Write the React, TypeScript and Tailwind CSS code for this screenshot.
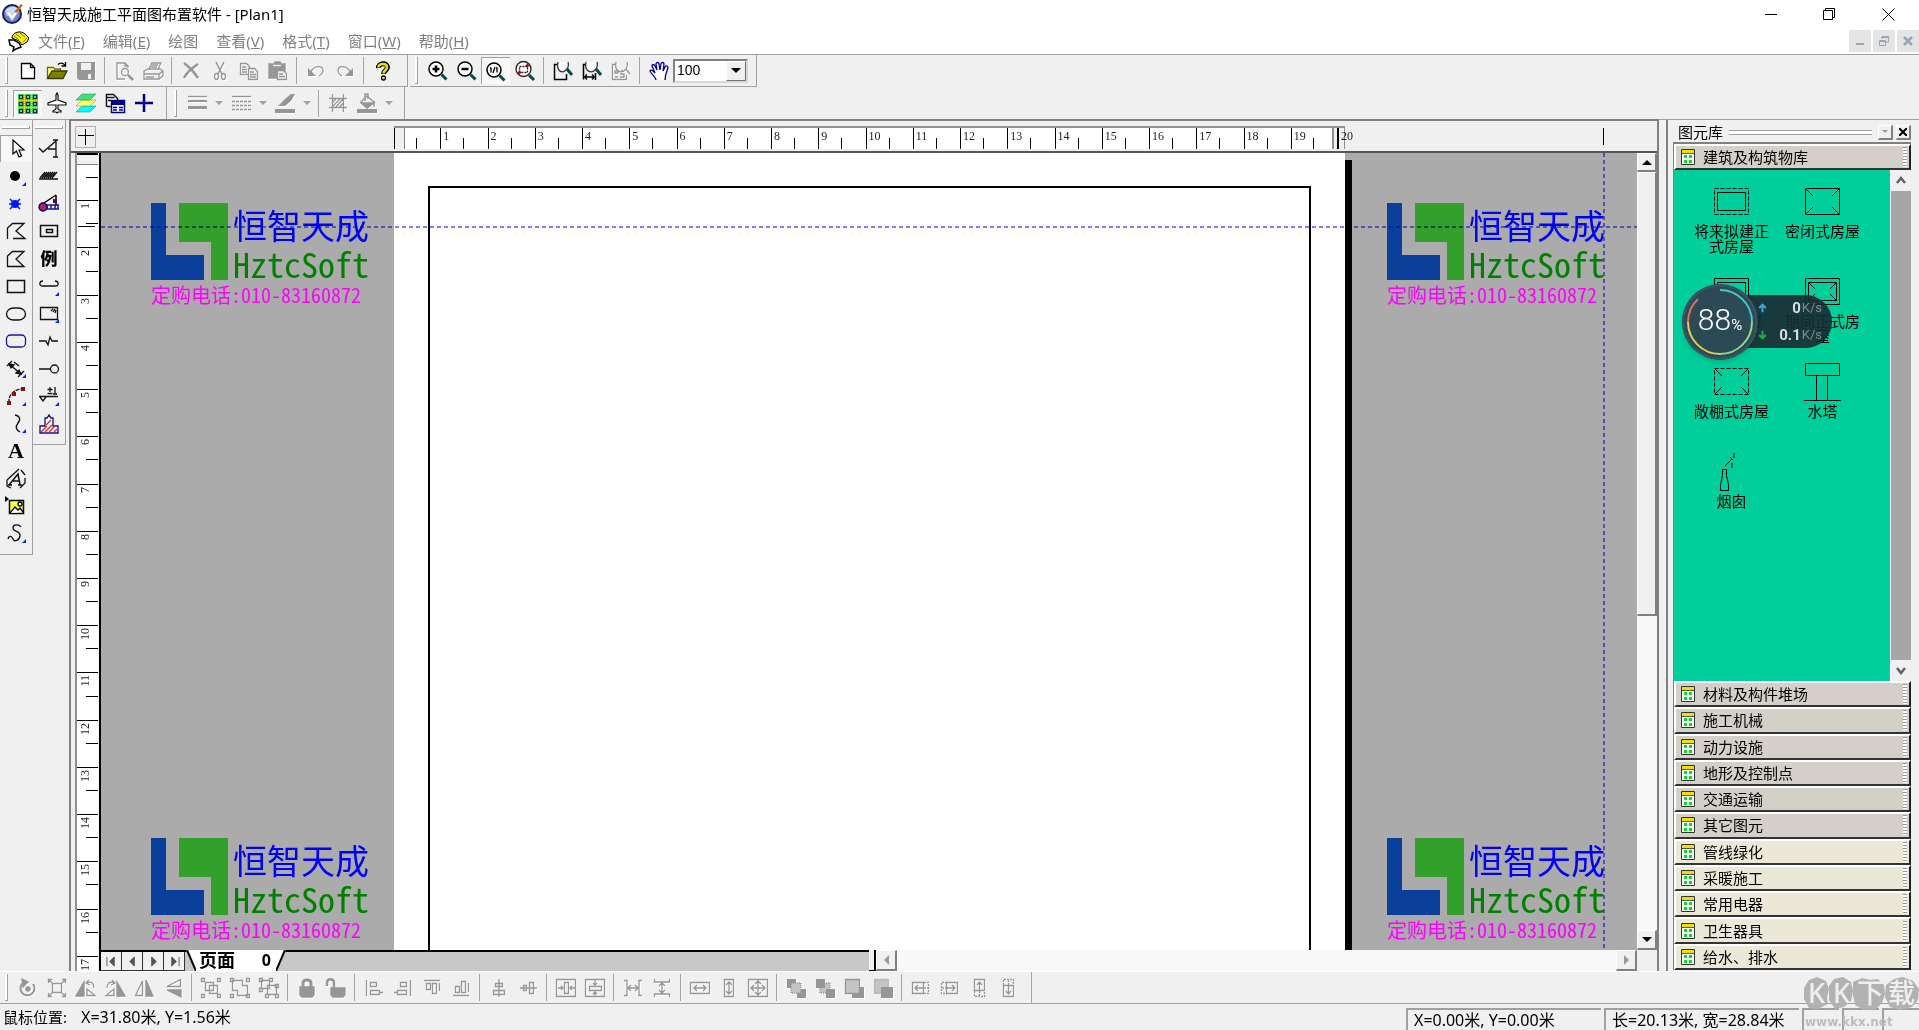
import React from "react";

const K = "#111";

const icons: Record<string, React.ReactNode> = {
  fresh: <path d="M4.5 3.5h9l4 4v11h-13zM13.5 3.5v4h4" stroke="#000" fill="#fff" />,
  open: (
    <>
      <path d="M1.500 18V7.500h6l1 1.500h6V11" fill="#ffff80" stroke="#6b6b00" />
      <path d="M1.500 18.500 6 11h15l-4 7.500z" fill="#808000" stroke="#3a3a00" />
      <path d="M12 4.500c2-2 5-2 7 1M19.500 2v4h-4" stroke="#000" />
    </>
  ),
  save: (
    <>
      <path d="M2 2h18v18H4l-2-2z" fill="currentColor" stroke="none" />
      <path d="M6 3h10v7H6zM13 14h3v5h-3z" fill="#f0f0f0" stroke="none" />
    </>
  ),
  preview: (
    <>
      <path d="M15 8V6l-3-3H4v16h8M12 3v3h3" />
      <circle cx="12" cy="12" r="3.500" />
      <path d="m15 15 5 5" strokeWidth="2.500" />
    </>
  ),
  print: (
    <>
      <path d="m7 9 3-6h9l-3 6M2 11l4-2h12l3 2v5l-4 3H2z" />
      <path d="M2 14h15l4-3M17 14v5M10 5h6M9 7h6M4 17h8" />
    </>
  ),
  cross: <path d="M4 3c4 3 10 9 14 15M18 4C12 8 7 12 4 18" strokeWidth="2.500" />,
  cut: (
    <>
      <path d="m7 2 6 12M15 2 9 14" strokeWidth="1.500" />
      <ellipse cx="7.500" cy="16.500" rx="2" ry="3" />
      <ellipse cx="14.500" cy="16.500" rx="2" ry="3" />
    </>
  ),
  copy: (
    <>
      <path d="M2.500 3.500h6l3 3v8h-9zM4 7h4M4 9.500h5M4 12h5" />
      <path d="M10.500 8.500h6l3 3v8h-9z" fill="#f0f0f0" />
      <path d="M12 12h4M12 14.500h6M12 17h6" />
    </>
  ),
  paste: (
    <>
      <path d="M2 4h5l1-2h5l1 2h4v14H2z" fill="currentColor" />
      <path d="M6 5.500h8" stroke="#f0f0f0" />
      <path d="M10.500 10.500h6l3 3v6h-9z" fill="#f0f0f0" />
      <path d="M12 14h4M12 16.500h6" />
    </>
  ),
  undo: (
    <>
      <path d="M5 13C9 5 17 5 18 10c0 3-2 5-4 6" />
      <path d="M3 8v8h8z" fill="currentColor" stroke="none" />
    </>
  ),
  redo: (
    <>
      <path d="M17 13C13 5 5 5 4 10c0 3 2 5 4 6" />
      <path d="M19 8v8h-8z" fill="currentColor" stroke="none" />
    </>
  ),
  help: (
    <>
      <path d="M6.500 8C6 3 15 2 15.500 7c0 4-4 3-4 7" stroke="#000" strokeWidth="5" />
      <path d="M6.500 7.500C6 3.500 14.500 2.500 15 7c0 4-3.500 3-3.500 6.500" stroke="#e6e600" strokeWidth="2.500" />
      <circle cx="11.500" cy="18" r="2" fill="#e6e600" stroke="#000" />
    </>
  ),
  zin: (
    <>
      <circle cx="9" cy="9" r="7" stroke="#000" fill="#fff" strokeWidth="1.500" />
      <path d="M5.500 9h7M9 5.500v7" stroke="#000" strokeWidth="2.500" />
      <path d="m14.500 14.500 5 5" stroke="#064a4a" strokeWidth="3" />
    </>
  ),
  zout: (
    <>
      <circle cx="9" cy="9" r="7" stroke="#000" fill="#fff" strokeWidth="1.500" />
      <path d="M5.500 9h7" stroke="#000" strokeWidth="2.500" />
      <path d="m14.500 14.500 5 5" stroke="#064a4a" strokeWidth="3" />
    </>
  ),
  zone: (
    <>
      <circle cx="9" cy="10" r="7" stroke="#000" fill="#fff" strokeWidth="1.500" />
      <path d="M6 7.500v5M12 7.500v5M10 7l-2 6M5 8h1M11 8h1" stroke="#000" />
      <path d="m14.500 15.500 5 5" stroke="#064a4a" strokeWidth="3" />
    </>
  ),
  zarea: (
    <>
      <circle cx="9.500" cy="9" r="7.500" stroke="#222" fill="#fff" />
      <path d="M5.500 12.500v-6h8v6z" stroke="#222" strokeDasharray="2 1" />
      <path d="M3.500 12.500h4M5.500 10.500v4M11.500 5.500h4M13.500 3.500v4" stroke="#b00000" strokeWidth="1.500" />
      <path d="m15 15 5 5" stroke="#064a4a" strokeWidth="3" />
    </>
  ),
  zpage: (
    <>
      <path d="M6 4.500H2.500v15h12V14" stroke="#000" strokeWidth="1.500" />
      <path d="M6 2c-2 9 4 12 8 8 2-2 3-5 2-8" stroke="#333" fill="#fff" />
      <path d="m15 9 5 6" stroke="#064a4a" strokeWidth="3" />
    </>
  ),
  zwidth: (
    <>
      <path d="M5 4.500H2.500v15M14.500 13v7" stroke="#000" strokeWidth="1.500" />
      <path d="M5 2c-2 9 5 12 9 8 2-2 3-5 2-8" stroke="#333" fill="#fff" />
      <path d="m15 9 5 6" stroke="#064a4a" strokeWidth="3" />
      <path d="M4 17h9M6 14.500 3.500 17 6 19.500M11 14.500l2.500 2.500-2.500 2.500" stroke="#000" />
    </>
  ),
  zobj: (
    <>
      <path d="M5 4.500H2.500v15h14V15" />
      <path d="M6 2c-2 9 5 12 9 8 2-2 3-5 2-8M16 9l4 5" />
      <path d="M5 11h3v2H5zM5 17h3M10 14h4v3h-4M11 11h2" />
    </>
  ),
  hand: (
    <path
      d="M8 20c0-3-4-5-6-9 1-2 3 0 5 2L4 6c0-2 2-2 3 0l2 4-1-6c0-2 3-2 3 0l1 6 1-6c0-2 3-2 3 0l-1 7 2-4c1-2 3-1 3 1-2 5-3 7-3 12"
      stroke="#000099"
      fill="#fff"
      strokeWidth="1.300"
    />
  ),
  dots: (
    <>
      <path d="M1 1h20v20H1z" fill="#2fe36b" stroke="none" />
      <path d="M1 7.500h20M1 14.500h20M7.500 1v20M14.500 1v20" stroke="#ffee20" strokeDasharray="1 1" />
      {[2.500, 9.500, 16.500].map((y) =>
        [2.500, 9.500, 16.500].map((x) => <rect key={`${x}-${y}`} x={x} y={y} width="3" height="3" fill="#aef" stroke="#033" />)
      )}
    </>
  ),
  plane: (
    <path d="M10 8V3l1-2 1 2v5l8 3v2h-8v4l3 2v1h-3l-1 1-1-1H7v-1l3-2v-4H2v-2z" stroke="#111" fill="#fff" strokeWidth="1.200" />
  ),
  layers: (
    <>
      <path d="M7 14h14l-6 6H1z" fill="#00ffff" stroke="#008888" strokeWidth=".5" />
      <path d="M7 8h14l-6 6H1z" fill="#ffff66" stroke="#888800" strokeWidth=".5" />
      <path d="M7 2h14l-6 6H1z" fill="#40e080" stroke="#118844" strokeWidth=".5" />
    </>
  ),
  docs: (
    <>
      <path d="M2.500 14.500v-12h7l4 4v2M2.500 5.500h8M2.500 14.500h4M4 8.500h3" stroke="#111" strokeWidth="1.500" fill="#fff" />
      <path d="M7.500 8.500h13v12h-13z" stroke="#000070" fill="#fff" strokeWidth="1.500" />
      <path d="M7 8h14v5H7z" fill="#000090" stroke="none" />
      <path d="M9 15.500h4M15 15.500h4M9 18h4M15 18h4" stroke="#000070" />
    </>
  ),
  plus: <path d="M11 2v18M2 11h18" stroke="#000090" strokeWidth="2.500" />,
  lines: (
    <>
      <path d="M2 4.500h19" />
      <path d="M2 9h19" strokeWidth="2" />
      <path d="M2 15.500h19" strokeWidth="3" />
    </>
  ),
  dashes: (
    <>
      <path d="M2 4.500h19" />
      <path d="M2 9.500h19M2 13.500h19M2 17.500h19" strokeDasharray="3 1" />
    </>
  ),
  pen: <path d="M1 17h20v4H1zM5 13l7-7 5-4h4l-4 7-6 5H4z" fill="currentColor" stroke="none" />,
  hatch: <path d="M5.500 2v18M16.500 2v18M2 6.500h18M2 15.500h18M6 14l7-7M8 16l8-9M12 16l4-5M6 10l3-3" />,
  bucket: (
    <>
      <path d="M1 17h20v4H1z" fill="currentColor" stroke="none" />
      <path d="m5 10 6-6 7 6-7 6z" />
      <path d="M5 11h13l-7 5z" fill="currentColor" />
      <path d="M9 9V2h3v5M18 9v6" strokeWidth="1.500" />
    </>
  ),
  pointer: <path d="M7 2v14l3.500-3 2.500 6 2.500-1-2.500-6h5z" fill="#fff" stroke="#000" strokeWidth="1.200" />,
  dot: <circle cx="10" cy="11" r="5" fill="#000" stroke="none" />,
  node: (
    <>
      <circle cx="10" cy="11" r="4" fill="#0018ff" stroke="none" />
      <path d="m5 6 10 10M15 6 5 16M4 11h12" stroke="#0018ff" strokeWidth="1.500" />
    </>
  ),
  polyopen: <path d="M2.500 19V8l5-4.500H19L11 11l9 7.500H8" stroke={K} strokeWidth="1.300" />,
  poly: <path d="M2.500 18.500V8l5-4.500H19L11 11l8 7.500z" stroke={K} strokeWidth="1.300" />,
  rect: <path d="M2.500 5.500h17v12h-17z" stroke={K} strokeWidth="1.500" />,
  oval: <rect x="1.500" y="5" width="19" height="12" rx="7" stroke={K} strokeWidth="1.300" />,
  round: <rect x="1.500" y="5" width="19" height="12" rx="4" stroke="#1414a0" strokeWidth="1.300" />,
  dim: (
    <>
      <path d="m4 6 12 10M2 8l5-5M13 19l6-6M9 4l5 4" stroke={K} />
      <path d="m4 6 5 1-3 3zM16 16l-5-1 3-3z" fill={K} stroke={K} />
    </>
  ),
  arc: (
    <>
      <path d="M4 18C3 10 9 4 18 4" stroke={K} strokeDasharray="4 1" />
      <path d="M2 16h4v4H2zM7 7h4v4H7zM16 2h4v4h-4z" fill="#901010" stroke="none" />
    </>
  ),
  curve: <path d="M10 2c5 1 6 4 3 8s-2 7 2 9" stroke={K} strokeWidth="1.300" />,
  curvetext: (
    <>
      <path d="M2 12 14 1M15 20l5-5v-5M2 12v6l4 2M16 2l4 5" stroke={K} />
      <path d="M4 17 13 6l2 11M8 13h6M3 17h4M13 17h4" stroke={K} strokeWidth="1.500" />
    </>
  ),
  picture: (
    <>
      <path d="M0 1v6l4-3z" fill="#000" stroke="none" />
      <path d="M4.500 5.500h14v13h-14z" fill="#ffff40" stroke="#000" strokeWidth="1.500" />
      <path d="m5 18 5-6 3 3 2-2 3 4" fill="#fff" stroke="#000" />
      <circle cx="15" cy="9" r="2" fill="#fff" stroke="#000" />
    </>
  ),
  scurve: <path d="M16 4c-2-3-8-3-8 1s8 3 7 8-6 6-7 3-4-4-5 0" stroke={K} strokeWidth="1.300" />,
  check: <path d="m1 10 4 4L18 3M18 2v17M10 11h8M15 2h5M15 19h5" stroke={K} strokeWidth="1.300" />,
  ground: <path d="M1 14h19M2 13l5-6M6 13l5-6M10 13l5-6M14 13l5-6M4 13l5-6M8 13l5-6M12 13l5-6" stroke={K} />,
  crane: (
    <>
      <path d="M1 12h20M1 16h20M9 12v4M13 12v4M17 12v4M20 12v4" stroke="#1414a0" strokeWidth="1.500" />
      <path d="M3 12 18 2M18 2v10" stroke="#000" strokeWidth="1.500" />
      <circle cx="5" cy="14" r="4" fill="#b0206a" stroke="#000060" />
      <path d="M15 6h4v4h-4z" fill="#501030" stroke="none" />
    </>
  ),
  nested: <path d="M2.500 5.500h17v11h-17zM8.500 9.500h6v3h-6z" stroke={K} strokeWidth="1.500" />,
  bracket: <path d="M5 6C1 6 1 11 4 11h14c3 0 3-5-1-5" stroke={K} strokeWidth="1.300" />,
  sheet: <path d="M2.500 4.500h17v12h-17zM13 8l2-2M15 9l2-3M17 10l1-3" stroke={K} strokeWidth="1.300" />,
  brk: <path d="M1 11h7l2 4 2-8 2 4h6" stroke={K} strokeWidth="1.300" />,
  pin: (
    <>
      <path d="M1 11h12" stroke={K} strokeWidth="1.500" />
      <circle cx="16.500" cy="11" r="4" stroke={K} />
    </>
  ),
  level: <path d="M1 11.500h19M2 12l3 4 3-4M12 2v5M9.500 4.500h5M9.500 8.500h5M17 2v7M15 9h4" stroke={K} strokeWidth="1.300" />,
  base: (
    <>
      <path d="M2 20v-7h5V5h2l2-3 2 3h2v8h5v7z" fill="#fff" stroke="#101080" strokeWidth="1.300" />
      <path d="m3 19 6-6M7 19l7-7M11 19l6-6M16 19l3-3M8 12l5-5" stroke="#e03030" strokeWidth="1.500" />
    </>
  ),
  rotate: (
    <>
      <path d="M6 6a7 7 0 1 0 10 1" strokeWidth="2" />
      <path d="m5 2 6 3-5 5z" fill="currentColor" />
      <circle cx="11" cy="12" r="2" fill="currentColor" />
    </>
  ),
  resize: <path d="M6.500 6.500h9v9h-9zM6 6 2 2M16 6l4-4M6 16l-4 4M16 16l4 4M2.500 6V2.500H6M16 2.500h3.500V6M2.500 16v3.500H6M19.500 16v3.500H16" />,
  rotl: (
    <>
      <path d="m1 19 8-14v14z" fill="currentColor" />
      <path d="M12 18.500h8L12 12zM12 6c4-2 7 0 7 5M14 3l-3 3 4 2" />
    </>
  ),
  rotr: (
    <>
      <path d="m21 19-8-14v14z" fill="currentColor" />
      <path d="M10 18.500H2L10 12zM10 6c-4-2-7 0-7 5M8 3l3 3-4 2" />
    </>
  ),
  fliph: (
    <>
      <path d="M9.500 4v14.500h-7z" />
      <path d="M13 3v16h7z" fill="currentColor" />
    </>
  ),
  flipv: (
    <>
      <path d="M18.500 2.500v7H5z" />
      <path d="M19 20v-7H5z" fill="currentColor" />
    </>
  ),
  group: (
    <path d="M5.500 5.500h8v8h-8zM9.500 8.500h8v8h-8zM1.500 1.500h3v3h-3zM17.500 1.500h3v3h-3zM1.500 17.500h3v3h-3zM17.500 17.500h3v3h-3z" />
  ),
  ungroup: <path d="M3.500 3.500h10v5h5v10h-10v-5h-5zM1.500 1.500h3v3h-3zM17.500 1.500h3v3h-3zM1.500 17.500h3v3h-3zM17.500 17.500h3v3h-3z" />,
  regroup: (
    <path d="M3.500 3.500h8v8h-8zM9.500 8.500h9v9h-9zM1.500 1.500h3v3h-3zM11.500 1.500h3v3h-3zM1.500 11.500h3v3h-3zM17.500 7.500h3v3h-3zM7.500 17.500h3v3h-3zM17.500 17.500h3v3h-3z" />
  ),
  lock: (
    <>
      <path d="M4 10h14v8l-2 2H6l-2-2z" fill="currentColor" />
      <path d="M7 10V6c0-4 8-4 8 0v4" strokeWidth="3" />
    </>
  ),
  unlock: (
    <>
      <path d="M6 11h14v7l-2 2H8l-2-2z" fill="currentColor" />
      <path d="M9 11V6c0-5-7-5-7 0v3" strokeWidth="2.500" />
    </>
  ),
  al: <path d="M3.500 3v16M7.500 5.500h6v4h-6zM7.500 13.500h9v4h-9zM17 15.500h3" />,
  ar: <path d="M18.500 3v16M8.500 5.500h6v4h-6zM5.500 13.500h9v4h-9zM2 15.500h3" />,
  at: <path d="M3 3.500h16M5.500 6.500h4v6h-4zM11.500 6.500h4v10h-4zM18.500 6v8" />,
  ab: <path d="M3 18.500h16M5.500 9.500h4v6h-4zM11.500 4.500h4v11h-4zM18.500 6v9" />,
  cv: <path d="M11 2v18M7.500 6.500h7v3h-7zM5.500 13.500h11v4h-11z" fill="#f0f0f0" />,
  ch: <path d="M3 11h17M6.500 8.500h3v5h-3zM12.500 5.500h4v11h-4z" fill="#f0f0f0" />,
  pch: <path d="M1.500 2.500h19v17h-19zM9.500 5.500h4v11h-4zM3 11h5M15 11h5M6 9l2 2-2 2M17 9l-2 2 2 2" />,
  pcv: <path d="M1.500 2.500h19v17h-19zM5.500 9.500h12v4h-12zM11 3v5M11 15v4M9 6l2 2 2-2M9 17l2-2 2 2" />,
  sh: <path d="M2 3.500h3v15H2M20 3.500h-3v15h3M6 11h10M9 8l-3 3 3 3M13 8l3 3-3 3" />,
  sv: <path d="M3.500 2v3h15V2M3.500 20v-3h15v3M11 6v10M8 9l3-3 3 3M8 13l3 3 3-3" />,
  ww: <path d="M1.500 5.500h19v11h-19zM5 11h12M8 8l-3 3 3 3M14 8l3 3-3 3" />,
  hh: <path d="M6.500 2.500h9v17h-9zM11 5v12M8 8l3-3 3 3M8 14l3 3 3-3" />,
  wh: <path d="M1.500 2.500h19v17h-19zM4 11h14M11 4v14M7 8l-3 3 3 3M15 8l3 3-3 3M8 7l3-3 3 3M8 15l3 3 3-3" />,
  z1: (
    <>
      <path d="M2 2h9v9H2zM12 12h9v9h-9z" fill="currentColor" stroke="none" />
      <path d="M6 6h10v10H6z" fill="#c4c4c4" strokeDasharray="1 1" />
    </>
  ),
  z2: (
    <>
      <path d="M6 6h10v10H6z" fill="#c4c4c4" strokeDasharray="1 1" />
      <path d="M2 2h9v9H2zM12 12h9v9h-9z" fill="currentColor" stroke="none" />
    </>
  ),
  z3: (
    <>
      <path d="M9 10h12v11H9z" fill="currentColor" stroke="none" />
      <path d="M2.500 2.500h14v14h-14z" fill="#c4c4c4" />
    </>
  ),
  z4: (
    <>
      <path d="M2.500 2.500h14v14h-14z" fill="#c4c4c4" strokeDasharray="1 1" />
      <path d="M9 10h12v11H9z" fill="currentColor" stroke="none" />
    </>
  ),
  n1: (
    <>
      <path d="M2.500 5.500h11v11h-11zM5 11h8M8 8l-3 3 3 3" />
      <path d="M14 5.500h4.500v11H14M14 11h4" strokeDasharray="2 1" />
    </>
  ),
  n2: (
    <>
      <path d="M7.500 5.500h11v11h-11zM8 11h8M13 8l3 3-3 3" />
      <path d="M8 5.500H2.500v11H8M3 11h5" strokeDasharray="2 1" />
    </>
  ),
  n3: (
    <>
      <path d="M6.500 2.500h10v11h-10zM11.500 5v8M9 8l2.500-3L14 8" />
      <path d="M6.500 14v5.500h10V14M11.500 14v5" strokeDasharray="2 1" />
    </>
  ),
  n4: (
    <>
      <path d="M6.500 8.500h10v11h-10zM11.500 9v8M9 14l2.500 3 2.500-3" />
      <path d="M6.500 8V2.500h10V8M11.500 3v5" strokeDasharray="2 1" />
    </>
  ),
};

function Icon({ name }: { name: string }) {
  return (
    <svg viewBox="0 0 22 22" className="h-[22px] w-[22px] shrink-0" fill="none" stroke="currentColor" strokeWidth="1.300">
      {icons[name]}
    </svg>
  );
}

function Tool({ name, label, off, pressed }: { name: string; label: string; off?: boolean; pressed?: boolean }) {
  return (
    <button
      aria-label={label}
      disabled={off}
      className={`flex h-[27px] w-[29px] shrink-0 items-center justify-center text-[#969696] ${off ? "drop-shadow-[1px_1px_0_#fff]" : ""} ${
        pressed ? "border-t border-l border-[#a0a0a0] bg-[#f8f8f8]" : ""
      }`}
    >
      <Icon name={name} />
    </button>
  );
}

const Sep = () => <span className="mx-1 h-[27px] w-px shrink-0 bg-[#a6a6a6]" />;
const Grip = () => <span className="mr-[5px] ml-[5px] h-[27px] w-[3px] shrink-0 border-r border-b border-[#a0a0a0] bg-white" />;

function Strip({ items, off }: { items: string[]; off?: boolean }) {
  return (
    <>
      {items.map((n, i) => (n === "|" ? <Sep key={i} /> : <Tool key={i} name={n} label={n} off={off} pressed={n === "zone" || n === "dots"} />))}
    </>
  );
}

function DropArrow({ label }: { label: string }) {
  return (
    <button aria-label={label} disabled className="flex h-[27px] w-[15px] shrink-0 items-center justify-center">
      <span className="border-x-[4px] border-t-[4px] border-x-transparent border-t-[#9f9f9f]" />
    </button>
  );
}

const menus: [string, string][] = [
  ["文件", "F"],
  ["编辑", "E"],
  ["绘图", ""],
  ["查看", "V"],
  ["格式", "T"],
  ["窗口", "W"],
  ["帮助", "H"],
];

function Header() {
  return (
    <header className="shrink-0 border-b border-[#a0a0a0] bg-white">
      <div className="flex h-[30px] items-center pb-[2px] pl-[1px]">
        <svg viewBox="0 0 22 22" className="h-[22px] w-[22px]">
          <circle cx="11" cy="11" r="10" fill="#17205e" />
          <circle cx="11" cy="11" r="8" fill="#6d86c8" />
          <path d="M4 8c3-5 10-6 13-2l-3 5-8 2z" fill="#cfdcf6" />
          <path d="m5 9 6 9 7-10-2-2-5 6-3-4z" fill="#fff" stroke="#8a9ad0" strokeWidth=".5" />
          <path d="m13 9 7-8 2 1-6 8z" fill="#c96b1c" />
        </svg>
        <h1 className="ml-[4px] grow text-[15px] text-black">恒智天成施工平面图布置软件 - [Plan1]</h1>
        <button aria-label="最小化" className="flex h-[28px] w-[59px] items-center justify-center">
          <span className="h-px w-[12px] bg-black" />
        </button>
        <button aria-label="还原" className="flex h-[28px] w-[58px] items-center justify-center">
          <svg viewBox="0 0 13 13" className="h-[13px] w-[13px]" fill="none" stroke="#000">
            <path d="M.5 2.500h9v9h-9zM2.500 2.500v-2h9v9h-2" />
          </svg>
        </button>
        <button aria-label="关闭" className="flex h-[28px] w-[61px] items-center justify-center">
          <svg viewBox="0 0 13 13" className="h-[13px] w-[13px]" stroke="#000">
            <path d="m.5.5 12 12M12.500.5l-12 12" />
          </svg>
        </button>
      </div>
      <nav className="flex h-[24px] items-center pb-[2px]">
        <svg viewBox="0 0 22 22" className="ml-[7px] h-[22px] w-[22px]">
          <path d="M5 8c0-6 9-8 13-4l4 4-2 4-5 3-3-4z" fill="#ffee00" stroke="#000" />
          <path d="M2 10h5l5 3 2 4-5 2-3 2 1-4-4-2z" fill="#fff" stroke="#000" strokeWidth="1.500" />
          <path d="m9 4 5 4M7 6l5 4M13 3l5 4M16 12l4-4" stroke="#807700" />
        </svg>
        <div className="flex grow">
          {menus.map(([t, k]) => (
            <button key={t} className="mx-[1px] px-[8px] text-[15px] leading-[22px] text-[#808080]">
              {t}
              {k && (
                <>
                  (<span className="underline">{k}</span>)
                </>
              )}
            </button>
          ))}
        </div>
        <div className="flex gap-[2px]">
          <button aria-label="最小化文档" className="flex h-[22px] w-[22px] items-center justify-center bg-[#e4e4e4]">
            <span className="mt-[6px] h-[2px] w-[8px] bg-[#98a5b3]" />
          </button>
          <button aria-label="还原文档" className="flex h-[22px] w-[22px] items-center justify-center bg-[#e4e4e4]">
            <svg viewBox="0 0 12 12" className="h-[12px] w-[12px]" fill="none" stroke="#98a5b3">
              <path d="M1.500 5.500h6v5h-6zM1.500 6.500h6M4 4V1.500h6.500V7H8M4 2.500h6" />
            </svg>
          </button>
          <button aria-label="关闭文档" className="flex h-[22px] w-[22px] items-center justify-center bg-[#e4e4e4]">
            <svg viewBox="0 0 12 12" className="h-[12px] w-[12px]" stroke="#98a5b3" strokeWidth="2.500">
              <path d="m2 2 8 8M10 2l-8 8" />
            </svg>
          </button>
        </div>
      </nav>
    </header>
  );
}

const bar = "flex items-center border-r border-b border-[#a0a0a0]";

function Toolbars() {
  return (
    <div className="shrink-0">
      <div className="flex h-[32px]">
        <div className={`${bar} w-[408px]`}>
          <Grip />
          <Tool name="fresh" label="新建" />
          <Tool name="open" label="打开" />
          <Strip off items={["save", "|", "preview", "print", "|", "cross", "cut", "copy", "paste", "|", "undo", "redo", "|"]} />
          <Tool name="help" label="帮助" />
        </div>
        <div className={`${bar} ml-[2px] w-[347px]`}>
          <Grip />
          <Strip items={["zin", "zout", "zone", "zarea", "|", "zpage", "zwidth"]} />
          <Tool name="zobj" label="缩放对象" off />
          <Sep />
          <Tool name="hand" label="平移" />
          <div className="relative h-[24px] w-[75px] border-2 border-[#d8d8d8] border-t-[#808080] border-l-[#808080] bg-white">
            <select
              aria-label="缩放比例"
              defaultValue="100"
              className="block h-[18px] w-full appearance-none pl-[2px] font-['Liberation_Sans',sans-serif] text-[14px] leading-[18px] text-black outline-none"
            >
              <option>100</option>
              <option>200</option>
            </select>
            <span className="pointer-events-none absolute top-0 right-0 flex h-[20px] w-[20px] items-center justify-center border border-t-white border-l-white border-r-[#707070] border-b-[#707070] bg-[#f0f0f0]">
              <span className="border-x-[5px] border-t-[5px] border-x-transparent border-t-black" />
            </span>
          </div>
        </div>
      </div>
      <div className="flex h-[32px]">
        <div className={`${bar} w-[167px] border-b-0`}>
          <Grip />
          <Strip items={["dots", "plane", "layers", "docs", "plus"]} />
        </div>
        <div className={`${bar} ml-[2px] w-[236px] border-b-0`}>
          <Grip />
          <Tool name="lines" label="线宽" off />
          <DropArrow label="线宽选项" />
          <Tool name="dashes" label="线型" off />
          <DropArrow label="线型选项" />
          <Tool name="pen" label="线色" off />
          <DropArrow label="线色选项" />
          <Sep />
          <Tool name="hatch" label="图案" off />
          <Tool name="bucket" label="填充" off />
          <DropArrow label="填充选项" />
        </div>
      </div>
    </div>
  );
}

const palette1 = ["pointer", "dot*", "node", "polyopen", "poly", "rect", "oval", "round", "dim*", "arc*", "curve*", "A", "curvetext", "picture", "scurve*"];
const palette2 = ["check", "ground", "crane", "nested", "例", "bracket*", "sheet*", "brk", "pin", "level*", "base"];

function Palette({ items }: { items: string[] }) {
  return (
    <div className="border-r border-b border-[#a0a0a0] pb-[7px]">
      <div className="mx-[2px] mt-[6px] mb-[6px] h-[3px] border-r border-b border-[#a0a0a0] bg-white" />
      <div className="grid">
        {items.map((it, i) => {
          const n = it.replace("*", "");
          return (
            <button
              key={it}
              aria-label={n}
              className={`relative flex w-[32px] items-center justify-center text-black ${i % 2 ? "h-[28px]" : "h-[27px]"} ${
                n === "pointer" ? "border-t border-l border-[#a0a0a0] bg-[#f8f8f8]" : ""
              }`}
            >
              {n === "A" ? (
                <span className="font-['Liberation_Serif',serif] text-[22px] leading-[22px] font-bold">A</span>
              ) : n === "例" ? (
                <span className="text-[17px] leading-[22px] font-black">例</span>
              ) : (
                <Icon name={n} />
              )}
              {it !== n && <span className="absolute right-[6px] bottom-[4px] border-b-[4px] border-l-[4px] border-b-[#0020ff] border-l-transparent" />}
            </button>
          );
        })}
      </div>
    </div>
  );
}

const rulerText = "font-['Liberation_Serif',serif] text-[12px] leading-[13px] text-[#222]";

function HRuler() {
  return (
    <div className="flex h-[32px] shrink-0 items-start border-b-2 border-[#555] pt-[5px]">
      <button aria-label="原点" className="ml-[4px] flex h-[22px] w-[21px] items-center justify-center border border-[#b0b0b0]">
        <svg viewBox="0 0 16 16" className="h-[16px] w-[16px]" stroke="#000">
          <path d="M7.500 0v16M0 6.500h16" />
        </svg>
      </button>
      <div className="ml-[298px] grid h-[23px] w-[951px] grid-cols-[945px_6px] border-t-2 border-[#909090]">
        <div className="grid grid-cols-20 bg-white">
          {Array.from({ length: 20 }, (_, i) => (
            <div key={i} className={`flex h-[21px] ${i === 19 ? "border-r-2 border-black" : "border-r border-black"}`}>
              <div className={`flex w-1/2 items-end border-black ${i === 0 ? "border-l" : ""}`}>
                {i === 0 && <span className="h-[21px] w-[10px] border-r border-[#808080] bg-[#f0f0f0]" />}
                <span className={`grow self-start pt-[2px] pl-[2px] ${rulerText}`}>{i || ""}</span>
                <span className="h-[11px] w-px bg-black" />
              </div>
              {i === 19 && <span className="ml-auto h-[21px] w-[5px] border-l-2 border-[#909090] bg-[#f0f0f0]" />}
            </div>
          ))}
        </div>
        <div className={`border-r border-[#909090] pt-[2px] pl-[2px] ${rulerText}`}>20</div>
      </div>
      <span className="mt-[2px] ml-[258px] h-[17px] w-px bg-black" />
    </div>
  );
}

function VRuler() {
  return (
    <div className="relative h-full w-[30px] shrink-0 overflow-hidden border-r-2 border-black pl-[4px]">
      <div className="grid h-[850px] w-[23px] auto-rows-fr border-l-2 border-[#909090] bg-white">
        {Array.from({ length: 18 }, (_, i) => (
          <div key={i} className={`flex flex-col border-black ${i === 0 ? "border-t-2" : "border-t"}`}>
            <div className="flex h-1/2 flex-col justify-between">
              {i === 0 ? (
                <span className="h-[10px] w-full border-b border-[#808080] bg-[#f0f0f0]" />
              ) : (
                <span className={`rotate-180 self-start pr-[2px] pb-[2px] [writing-mode:vertical-rl] ${rulerText}`}>{i}</span>
              )}
              <span className="h-px w-[12px] self-end bg-black" />
            </div>
          </div>
        ))}
      </div>
      <span className="absolute top-[73px] left-[7px] h-px w-[17px] bg-black" />
    </div>
  );
}

function Brand({ className }: { className: string }) {
  return (
    <div className={`absolute w-[224px] ${className}`}>
      <div className="flex h-[77px] gap-[5px]">
        <svg viewBox="0 0 77 77" className="h-[77px] w-[77px] shrink-0">
          <path d="M0 0h15v52h38v25H0z" fill="#0a3f9c" />
          <path d="M28 0h49v77H60V39H28z" fill="#33a02c" />
        </svg>
        <div className="pt-[6px] whitespace-nowrap">
          <div className="text-[34px] leading-[35px] text-[#0000ff]">恒智天成</div>
          <div className="font-['Noto_Sans_Mono_CJK_SC','Noto_Sans_Mono','Liberation_Mono',monospace] text-[34px] leading-[39px] text-[#008000]">HztcSoft</div>
        </div>
      </div>
      <div className="font-['Noto_Sans_Mono_CJK_SC','Noto_Sans_CJK_SC',monospace] text-[20px] leading-[29px] whitespace-nowrap text-[#ff00ff]">
        定购电话:010-83160872
      </div>
    </div>
  );
}

function Canvas() {
  return (
    <div className="relative min-w-0 grow overflow-hidden bg-[#ababab]">
      <div className="absolute top-[7px] bottom-0 left-[300px] w-[951px] bg-black" />
      <div className="absolute top-0 bottom-0 left-[293px] w-[951px] bg-white" />
      <div className="absolute top-[33px] bottom-0 left-[327px] w-[883px] border-[2px] border-b-0 border-black" />
      <Brand className="top-[50px] left-[50px]" />
      <Brand className="top-[50px] left-[1286px]" />
      <Brand className="top-[685px] left-[50px]" />
      <Brand className="top-[685px] left-[1286px]" />
      <div className="absolute top-[73px] right-0 left-0 h-[2px] bg-[repeating-linear-gradient(90deg,#7c7cff_0_4px,transparent_4px_7px)] mix-blend-multiply" />
      <div className="absolute top-0 bottom-0 left-[1502px] w-[2px] bg-[repeating-linear-gradient(180deg,#7c7cff_0_4px,transparent_4px_7px)] mix-blend-multiply" />
    </div>
  );
}

const btn = "flex shrink-0 items-center justify-center border-t border-l border-r-2 border-b-2 border-t-white border-l-white border-r-[#808080] border-b-[#808080] bg-[#f0f0f0]";

function Pane() {
  const nav = ["M1 1v10M9 1v10L4 6z", "M8 1v10L3 6z", "M4 1v10l5-5z", "M3 1v10l5-5zM11 1v10"];
  return (
    <section className="flex min-w-0 grow flex-col border-t-2 border-r-2 border-l-2 border-[#808080]">
      <HRuler />
      <div className="flex min-h-0 grow">
        <VRuler />
        <div className="flex min-w-0 grow flex-col">
          <div className="flex min-h-0 grow">
            <Canvas />
            <div className="flex w-[20px] shrink-0 flex-col bg-[#f8f8f8]">
              <button aria-label="向上滚动" className={`${btn} h-[19px]`}>
                <span className="border-x-[5px] border-b-[5px] border-x-transparent border-b-black" />
              </button>
              <div className={`${btn} h-[444px]`} />
              <button aria-label="向下滚动" className={`${btn} mt-auto h-[20px]`}>
                <span className="border-x-[5px] border-t-[5px] border-x-transparent border-t-black" />
              </button>
            </div>
          </div>
          <div className="flex h-[21px] shrink-0">
            <div className="flex w-[768px] border-t-2 border-black bg-[#c8c8c8]">
              {nav.map((d, i) => (
                <button key={i} aria-label={`页面导航 ${i + 1}`} className="flex w-[21px] shrink-0 items-center justify-center border-r border-b border-[#333] bg-[#f0f0f0]">
                  <svg viewBox="0 0 12 12" className="h-[11px] w-[11px]" fill="#555" stroke="#555">
                    <path d={d} />
                  </svg>
                </button>
              ))}
              <button className="-mt-[2px] ml-[1px] flex h-[21px] items-center leading-[21px] font-bold text-black">
                <svg viewBox="0 0 10 21" className="h-[21px] w-[10px]">
                  <path d="M0 0h10v21z" fill="#fff" />
                  <path d="m1 0 9 21" stroke="#000" strokeWidth="2" />
                </svg>
                <span className="flex h-[21px] w-[80px] items-center justify-between bg-white pr-[5px] pl-[3px]">
                  <span className="text-[18px]">页面</span>
                  <span className="text-[16px]">0</span>
                </span>
                <svg viewBox="0 0 10 21" className="h-[21px] w-[10px]">
                  <path d="M0 0h10L0 21z" fill="#fff" />
                  <path d="M9 0 0 21" stroke="#000" strokeWidth="2" />
                </svg>
              </button>
            </div>
            <span className="w-[7px] border-r-2 border-b border-black bg-[#f0f0f0]" />
            <div className="flex grow bg-[#f8f8f8]">
              <button aria-label="向左滚动" className={`${btn} w-[21px]`}>
                <span className="border-y-[5px] border-r-[5px] border-y-transparent border-r-[#999]" />
              </button>
              <button aria-label="向右滚动" className={`${btn} ml-auto w-[21px]`}>
                <span className="border-y-[5px] border-l-[5px] border-y-transparent border-l-[#999]" />
              </button>
            </div>
            <span className="w-[20px] bg-[#f0f0f0]" />
          </div>
        </div>
      </div>
    </section>
  );
}

const groups = ["材料及构件堆场", "施工机械", "动力设施", "地形及控制点", "交通运输", "其它图元", "管线绿化", "采暖施工", "常用电器", "卫生器具", "给水、排水"];

function GroupRow({ label, pale }: { label: string; pale?: boolean }) {
  return (
    <button
      className={`flex min-h-[26px] w-full shrink-0 items-center border-t-2 border-r-2 border-b-2 border-l-2 border-t-white border-r-[#222] border-b-[#333] border-l-white pl-[5px] text-left text-[15px] leading-[20px] text-black ${
        pale ? "bg-[#ebe8d8]" : "bg-[#d4cfc9]"
      }`}
    >
      <svg viewBox="0 0 14 16" className="mr-[8px] h-[16px] w-[14px]">
        <path d="M.5.5h13v15H.5z" fill="#fff" stroke="#333" />
        <path d="M1 1h12v3H1z" fill="#f0e000" />
        <path d="M1 4.500h12" stroke="#555" />
        <path d="M3 6h3v3H3zM8 6h3v3H8zM3 11h3v3H3zM8 11h3v3H8z" fill="#00e020" />
      </svg>
      <span className="grow">{label}</span>
      <span className="mr-[2px] h-[20px] w-[4px] bg-[repeating-linear-gradient(180deg,#999_0_1px,#fff_1px_3px)]" />
    </button>
  );
}

const symbols: { label: string; art: React.ReactNode }[] = [
  { label: "将来拟建正式房屋", art: <path d="M4.500 13.500h28v18h-28z" /> },
  { label: "密闭式房屋", art: <path d="M1.500 9.500h34v26h-34zM2 10l7 7M35 10l-7 7M2 35l7-7M35 35l-7-7" /> },
  { label: "拟建房屋", art: <path d="M1.500 9.500h34v26h-34zM4.500 13.500h28v18h-28z" /> },
  { label: "期间正式房屋", art: <path d="M1.500 9.500h34v26h-34zM4.500 13.500h28v18h-28zM5 14l6 6M32 14l-6 6M5 31l6-6M32 31l-6-6" /> },
  { label: "敞棚式房屋", art: <path d="M2 10l7 7M35 10l-7 7M2 35l7-7M35 35l-7-7" /> },
  { label: "水塔", art: <path d="M1.500 4.500h34v12h-34zM12.500 17v24M23.500 17v24M0 41.500h37" /> },
  { label: "烟囱", art: <path d="M9.500 20.500h4v6l2 9v6h-8v-6l2-9zM12 17l7-7M17 8l3 3M21 4v5M19 14v5" /> },
];

function Library() {
  return (
    <aside className="flex w-[260px] shrink-0 flex-col border-t border-[#a0a0a0] pr-[8px] pl-[7px]">
      <div className="flex grow flex-col border-l-2 border-[#808080] pt-[2px] pl-[5px]">
        <div className="flex h-[20px] items-center pl-[5px]">
          <h2 className="text-[15px] leading-[20px] text-black">图元库</h2>
          <span className="mx-[6px] h-[5px] grow border-y border-[#a0a0a0] bg-white" />
          <button aria-label="折叠" className={`${btn} h-[15px] w-[15px]`}>
            <span className="border-x-[3px] border-t-[3px] border-x-transparent border-t-[#999]" />
          </button>
          <button aria-label="关闭图元库" className={`${btn} ml-[3px] h-[15px] w-[15px]`}>
            <svg viewBox="0 0 8 8" className="h-[8px] w-[8px]" stroke="#000" strokeWidth="2">
              <path d="m0 0 8 8M8 0 0 8" />
            </svg>
          </button>
        </div>
        <div className="mb-[1px] flex grow flex-col border-t-2 border-l border-[#808080]">
          <GroupRow label="建筑及构筑物库" />
          <div className="flex grow bg-[#00ce9b]">
            <div className="grid grow auto-rows-[90px] grid-cols-[91px_91px] content-start pt-[9px] pl-[12px]">
              {symbols.map((s, i) => (
                <button key={s.label} className="flex flex-col items-center px-[7px] text-[15px] leading-[15px] text-black">
                  <svg viewBox="0 0 37 46" className="h-[46px] w-[37px] shrink-0" fill="none" stroke="#000">
                    {(i === 0 || i === 4) && <path d="M1.500 9.500h34v26h-34z" strokeDasharray="4 2" />}
                    {s.art}
                  </svg>
                  <span className="-mt-px text-center">{s.label}</span>
                </button>
              ))}
            </div>
            <div className="flex w-[21px] shrink-0 flex-col border-l border-white bg-[#a6a6a6]">
              {["m2 8 4-5 4 5", "m2 3 4 5 4-5"].map((d, i) => (
                <button key={d} aria-label={i ? "图元向下" : "图元向上"} className={`flex h-[21px] items-center justify-center bg-[#f0f0f0] ${i ? "mt-auto" : ""}`}>
                  <svg viewBox="0 0 12 12" className="h-[12px] w-[12px]" fill="none" stroke="#606060" strokeWidth="2.500">
                    <path d={d} />
                  </svg>
                </button>
              ))}
            </div>
          </div>
          <div className="grid h-[289px] shrink-0 auto-rows-fr">
            {groups.map((g, i) => (
              <GroupRow key={g} label={g} pale={i > 5} />
            ))}
          </div>
        </div>
      </div>
    </aside>
  );
}

function Monitor() {
  return (
    <div className="absolute top-[284px] right-[87px] h-[76px] w-[150px] font-['Roboto',sans-serif]">
      <div className="absolute top-[11px] right-0 grid h-[53px] w-[112px] content-between rounded-r-full bg-[#1b2a33]/90 py-[4px] pr-[10px] pl-[38px] text-[15px] text-[#d7dde0]">
        {[
          ["#35a8e8", "M5 11V2M1 6l4-4 4 4", "0"],
          ["#20b040", "M5 1v9M1 6l4 4 4-4", "0.1"],
        ].map(([c, d, v]) => (
          <div key={v} className="flex items-center leading-[18px]">
            <svg viewBox="0 0 10 12" className="h-[10px] w-[9px]" fill="none" stroke={c} strokeWidth="2.500">
              <path d={d} />
            </svg>
            <span className="grow text-right font-bold">{v}</span>
            <span className="ml-[1px] text-[13px] text-[#7f8a90]">K/s</span>
          </div>
        ))}
      </div>
      <div className="absolute top-0 left-0 flex h-[76px] w-[76px] items-center justify-center rounded-full bg-[#2b4a56] shadow-md">
        <svg viewBox="0 0 76 76" className="absolute h-[76px] w-[76px]" fill="none" strokeWidth="2">
          <circle cx="38" cy="38" r="36.500" stroke="#3b5560" />
          <path d="M38 6a32 32 0 0 1 32 32" stroke="#45c8c8" />
          <path d="M70 38a32 32 0 0 1-32 32" stroke="#8bdc78" />
          <path d="M38 70A32 32 0 0 1 6 38" stroke="#d8cf50" />
          <path d="M6 38a32 32 0 0 1 10-23" stroke="#e0705a" />
        </svg>
        <span className="relative text-[30px] leading-[32px] font-light text-white">
          88<span className="text-[15px] font-normal">%</span>
        </span>
      </div>
    </div>
  );
}

function Watermark() {
  return (
    <div className="absolute right-0 bottom-0 h-[54px] w-[116px] overflow-hidden text-[#bdbdbd]">
      <svg viewBox="0 0 116 34" className="absolute top-0 left-0 h-[34px] w-[116px]" fill="#b2b2b2">
        <path d="m1 12 5-8 8-3 9 4 3 8-2 9 1 6-10 5-9-1-5-9zM26 10l5-7 9-2 8 5 2 9-2 10-7 6-9 2-6-9zM50 6l9-4 8 2 8-1 6 6 1 9-3 9-6 6-12 1-9-5-2-10zM83 9l8-6 9-2 10 4 6 8-1 11-6 7-12 3-10-3-5-10z" />
      </svg>
      <div className="absolute top-[3px] left-[5px] flex text-[27px] leading-[28px] font-medium whitespace-nowrap text-[#efefef]">
        <span className="w-[25px]">K</span>
        <span className="w-[24px]">K</span>
        <span className="w-[31px]">下</span>
        <span>载</span>
      </div>
      <span className="absolute bottom-[1px] left-[2px] font-['DejaVu_Sans',sans-serif] text-[12px] leading-[14px] font-bold">www.kkx.net</span>
    </div>
  );
}

export default function App() {
  const cell = "flex h-[22px] items-center border-t-2 border-l-2 border-[#a0a0a0] pb-[1px] pl-[6px]";
  return (
    <div className="relative flex h-screen w-full flex-col overflow-hidden bg-[#f0f0f0] font-['Noto_Sans','Noto_Sans_CJK_SC',sans-serif]">
      <Header />
      <Toolbars />
      <main className="flex min-h-0 grow">
        <div className="flex w-[69px] shrink-0 items-start border-t border-[#a0a0a0]">
          <Palette items={palette1} />
          <Palette items={palette2} />
        </div>
        <Pane />
        <Library />
      </main>
      <div className="flex h-[33px] shrink-0 items-center border-t border-b border-t-white border-b-[#a0a0a0]">
        <Grip />
        <Strip
          off
          items={["rotate", "resize", "rotl", "rotr", "fliph", "flipv", "|", "group", "ungroup", "regroup", "|", "lock", "unlock", "|", "al", "ar", "at", "ab", "|", "cv", "ch", "|", "pch", "pcv", "|", "sh", "sv", "|", "ww", "hh", "wh", "|", "z1", "z2", "z3", "z4", "|", "n1", "n2", "n3", "n4"]}
        />
        <span className="ml-[9px] h-[31px] w-px bg-[#a6a6a6]" />
      </div>
      <footer className="flex h-[26px] shrink-0 items-end gap-[3px] text-[16px] leading-[20px] text-black">
        <span className="flex h-[24px] grow items-center gap-[14px] pb-[2px] pl-[3px]">
          <span className="text-[15px]">鼠标位置:</span>
          <span>X=31.80米, Y=1.56米</span>
        </span>
        <span className={`${cell} w-[195px]`}>X=0.00米, Y=0.00米</span>
        <span className={`${cell} w-[195px]`}>长=20.13米, 宽=28.84米</span>
        <span className={`${cell} w-[37px]`} />
        <span className={`${cell} w-[37px]`} />
        <span className={`${cell} w-[37px]`} />
      </footer>
      <Monitor />
      <Watermark />
    </div>
  );
}
